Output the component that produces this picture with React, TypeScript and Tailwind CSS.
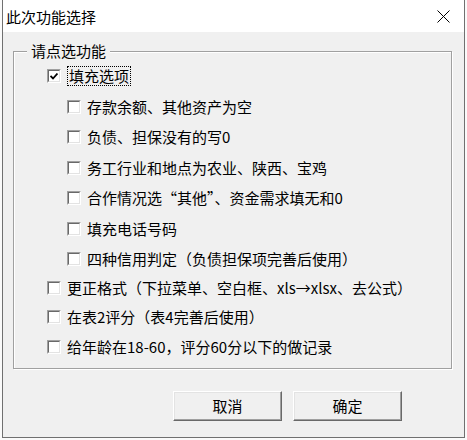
import React from 'react'

const font = { fontFamily: '"Noto Sans CJK SC", "Liberation Sans", sans-serif' }

type Opt = { label: string; sub?: boolean; checked?: boolean; focus?: boolean; h: string }

const options: Opt[] = [
  { label: '填充选项', checked: true, focus: true, h: 'h-[30.5px]' },
  { label: '存款余额、其他资产为空', sub: true, h: 'h-[30.5px]' },
  { label: '负债、担保没有的写0', sub: true, h: 'h-[30.5px]' },
  { label: '务工行业和地点为农业、陕西、宝鸡', sub: true, h: 'h-[30.5px]' },
  { label: '合作情况选“其他”、资金需求填无和0', sub: true, h: 'h-[30.5px]' },
  { label: '填充电话号码', sub: true, h: 'h-[30.5px]' },
  { label: '四种信用判定（负债担保项完善后使用）', sub: true, h: 'h-[29.5px]' },
  { label: '更正格式（下拉菜单、空白框、xls→xlsx、去公式）', h: 'h-[29px]' },
  { label: '在表2评分（表4完善后使用）', h: 'h-[29.5px]' },
  { label: '给年龄在18-60，评分60分以下的做记录', h: 'h-[30px]' },
]

function CheckBox({ checked }: { checked?: boolean }) {
  return (
    <div className="w-[14px] h-[14px] shrink-0 border-t border-l border-[#a0a0a0] border-b border-r border-b-white border-r-white">
      <div className="w-full h-full bg-white border-t border-l border-[#696969] border-b border-r border-b-[#e3e3e3] border-r-[#e3e3e3] flex items-center justify-center">
        {checked && (
          <svg width="8" height="7" viewBox="0 0 8 7">
            <path d="M0.5 3 L3 5.5 L7.5 0.5" stroke="#000" strokeWidth="1.8" fill="none" />
          </svg>
        )}
      </div>
    </div>
  )
}

function Button({ label }: { label: string }) {
  return (
    <button className="w-[109px] h-[30px] bg-[#f0f0f0] border-t border-l border-white border-b border-r border-b-[#696969] border-r-[#696969] shadow-[inset_-1px_-1px_0_#a0a0a0,inset_1px_1px_0_#e3e3e3] text-[15px] text-black flex items-center justify-center">
      {label}
    </button>
  )
}

export default function App() {
  return (
    <div className="w-[467px] h-[440px] bg-[#fafafa] overflow-hidden" style={font}>
      <div className="ml-[2px] w-[463px] h-[438px] border-l border-r border-b border-[#707070] flex flex-col bg-[#f0f0f0]">
        {/* Title bar */}
        <div className="h-[32px] bg-white flex items-center justify-between pl-[3px] pr-[14px]">
          <span className="text-[15px] text-black leading-none">此次功能选择</span>
          <svg width="13" height="13" viewBox="0 0 13 13">
            <path d="M0.5 0.5 L12.5 12.5 M12.5 0.5 L0.5 12.5" stroke="#000" strokeWidth="1" />
          </svg>
        </div>

        {/* Group box */}
        <div className="mt-[19px] ml-[10px] w-[439px] h-[318px] relative border border-[#a0a0a0] shadow-[1px_1px_0_#fff,inset_1px_1px_0_#fff]">
          <span className="absolute -top-[11px] left-[13px] px-[4px] bg-[#f0f0f0] text-[15px] leading-[20px] text-black">
            请点选功能
          </span>
          <div className="flex flex-col pt-[9px]">
            {options.map((o) => (
              <div key={o.label} className={`${o.h} flex items-center ${o.sub ? 'pl-[53px]' : 'pl-[33px]'}`}>
                <CheckBox checked={o.checked} />
                <span
                  className={`ml-[6px] text-[15px] leading-[18px] text-black whitespace-nowrap ${
                    o.focus ? 'border border-dotted border-black px-[1px] ml-[4px]' : ''
                  }`}
                >
                  {o.label}
                </span>
              </div>
            ))}
          </div>
        </div>

        {/* Buttons */}
        <div className="mt-[22px] ml-[170px] flex gap-[11px]">
          <Button label="取消" />
          <Button label="确定" />
        </div>
      </div>
    </div>
  )
}
